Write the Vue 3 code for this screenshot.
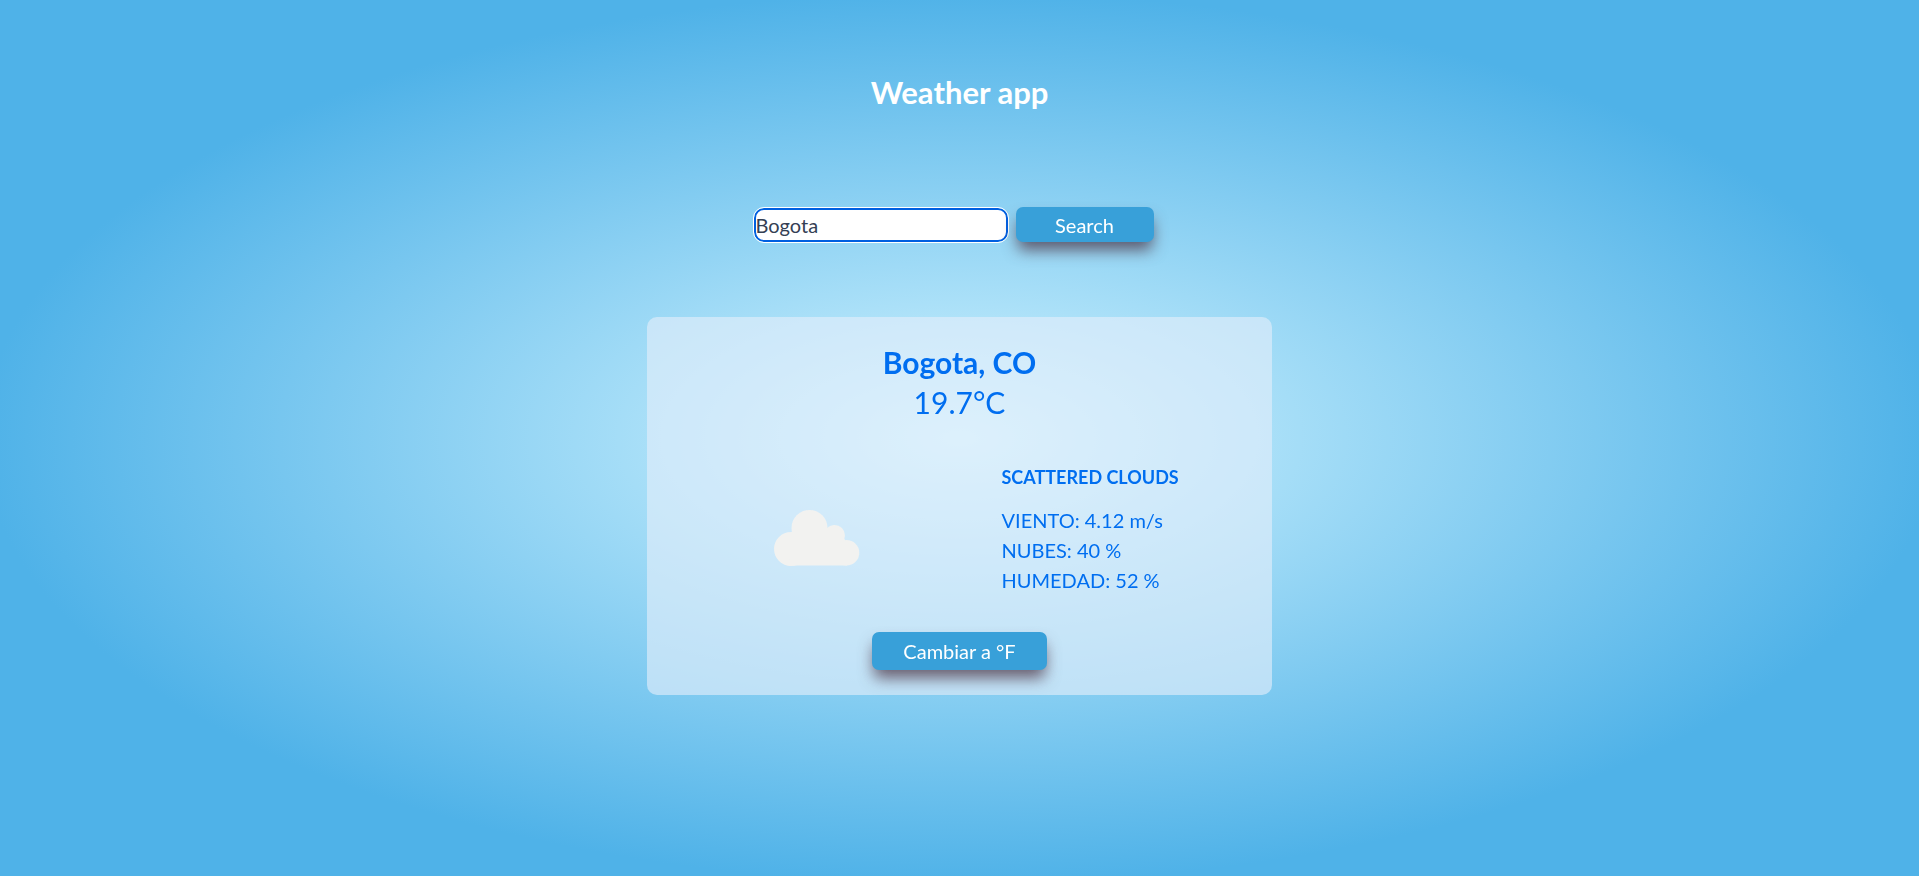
<script setup>
import { ref, computed, onMounted } from 'vue'

const city = ref('Bogota')
const cityInput = ref(null)
const celsius = ref(true)
const temperature = computed(() => (celsius.value ? '19.7°C' : '67.5°F'))
const details = [
  { label: 'VIENTO', value: '4.12 m/s' },
  { label: 'NUBES', value: '40 %' },
  { label: 'HUMEDAD', value: '52 %' },
]

onMounted(() => cityInput.value.focus())
</script>

<template>
  <main class="app">
    <h1 class="title">Weather app</h1>

    <form class="search" @submit.prevent>
      <input ref="cityInput" v-model="city" class="city" type="text" aria-label="City" />
      <button class="button submit" type="submit">Search</button>
    </form>

    <section class="card">
      <h2 class="place">Bogota, CO</h2>
      <p class="temperature">{{ temperature }}</p>
      <div class="body">
        <div class="picture">
          <svg class="cloud" viewBox="0 0 86 56" role="img" aria-label="Scattered clouds">
            <circle cx="17" cy="39" r="17" />
            <circle cx="35.5" cy="18" r="18" />
            <circle cx="60.5" cy="25.5" r="10.5" />
            <circle cx="72.5" cy="42.7" r="12.8" />
            <path d="M17 22H53L60 15L71 30L73 55.5H15Z" />
          </svg>
        </div>
        <div class="info">
          <h3 class="description">SCATTERED CLOUDS</h3>
          <ul class="details">
            <li v-for="item in details" :key="item.label">{{ item.label }}: {{ item.value }}</li>
          </ul>
        </div>
      </div>
      <button class="button toggle" type="button" @click="celsius = !celsius">
        Cambiar a {{ celsius ? '°F' : '°C' }}
      </button>
    </section>
  </main>
</template>

<style>
body {
  margin: 0;
  background: #fff;
}
</style>

<style scoped>
.app {
  box-sizing: border-box;
  min-height: calc(100vh - 2px);
  padding: 67px 16px 40px;
  display: flex;
  flex-direction: column;
  align-items: center;
  font-family: Lato, "Liberation Sans", sans-serif;
  font-size: 20px;
  line-height: 30px;
  background: radial-gradient(ellipse at center, #d2f4ff 0%, #4fb2e8 72%);
}

.title {
  margin: 0;
  color: #fff;
  font-size: 31px;
  font-weight: 700;
  line-height: 50px;
}

.search {
  display: flex;
  align-items: center;
  gap: 8px;
  margin: 90px 0 75px;
  padding-right: 12px;
}

.city {
  box-sizing: border-box;
  width: 254px;
  height: 34px;
  padding: 0;
  border: 2px solid #005fe0;
  border-radius: 10px;
  outline: 1px solid #fff;
  background: #fff;
  color: #344054;
  font: inherit;
}

.button {
  border: 0;
  border-radius: 7px;
  background: #38a0d9;
  box-shadow: 0 10px 15px -2px rgba(75, 50, 65, 0.75);
  color: #fff;
  font: inherit;
  cursor: pointer;
}

.submit {
  width: 138px;
  height: 35px;
  padding: 0;
}

.card {
  box-sizing: border-box;
  width: 100%;
  max-width: 625px;
  padding: 23px 16px 25px;
  display: flex;
  flex-direction: column;
  align-items: center;
  border-radius: 10px;
  background: rgba(226, 237, 251, 0.63);
  color: #006ef0;
}

.place {
  margin: 0;
  font-size: 30px;
  font-weight: 700;
  line-height: 44px;
}

.temperature {
  margin: 0;
  font-size: 30px;
  line-height: 36px;
}

.body {
  display: grid;
  grid-template-columns: 1fr 1fr;
  width: 100%;
  margin: 42px 0 37px;
}

.picture {
  display: flex;
  align-items: center;
  justify-content: center;
  padding: 18px 0 0 12px;
}

.cloud {
  width: 86px;
  height: 56px;
  fill: #f2f2f0;
}

.info {
  padding-left: 42px;
}

.description {
  margin: 0 0 13px;
  font-size: 18px;
  font-weight: 700;
  line-height: 30px;
}

.details {
  margin: 0;
  padding: 0;
  list-style: none;
}

.toggle {
  width: 175px;
  height: 38px;
  padding: 0;
}
</style>
